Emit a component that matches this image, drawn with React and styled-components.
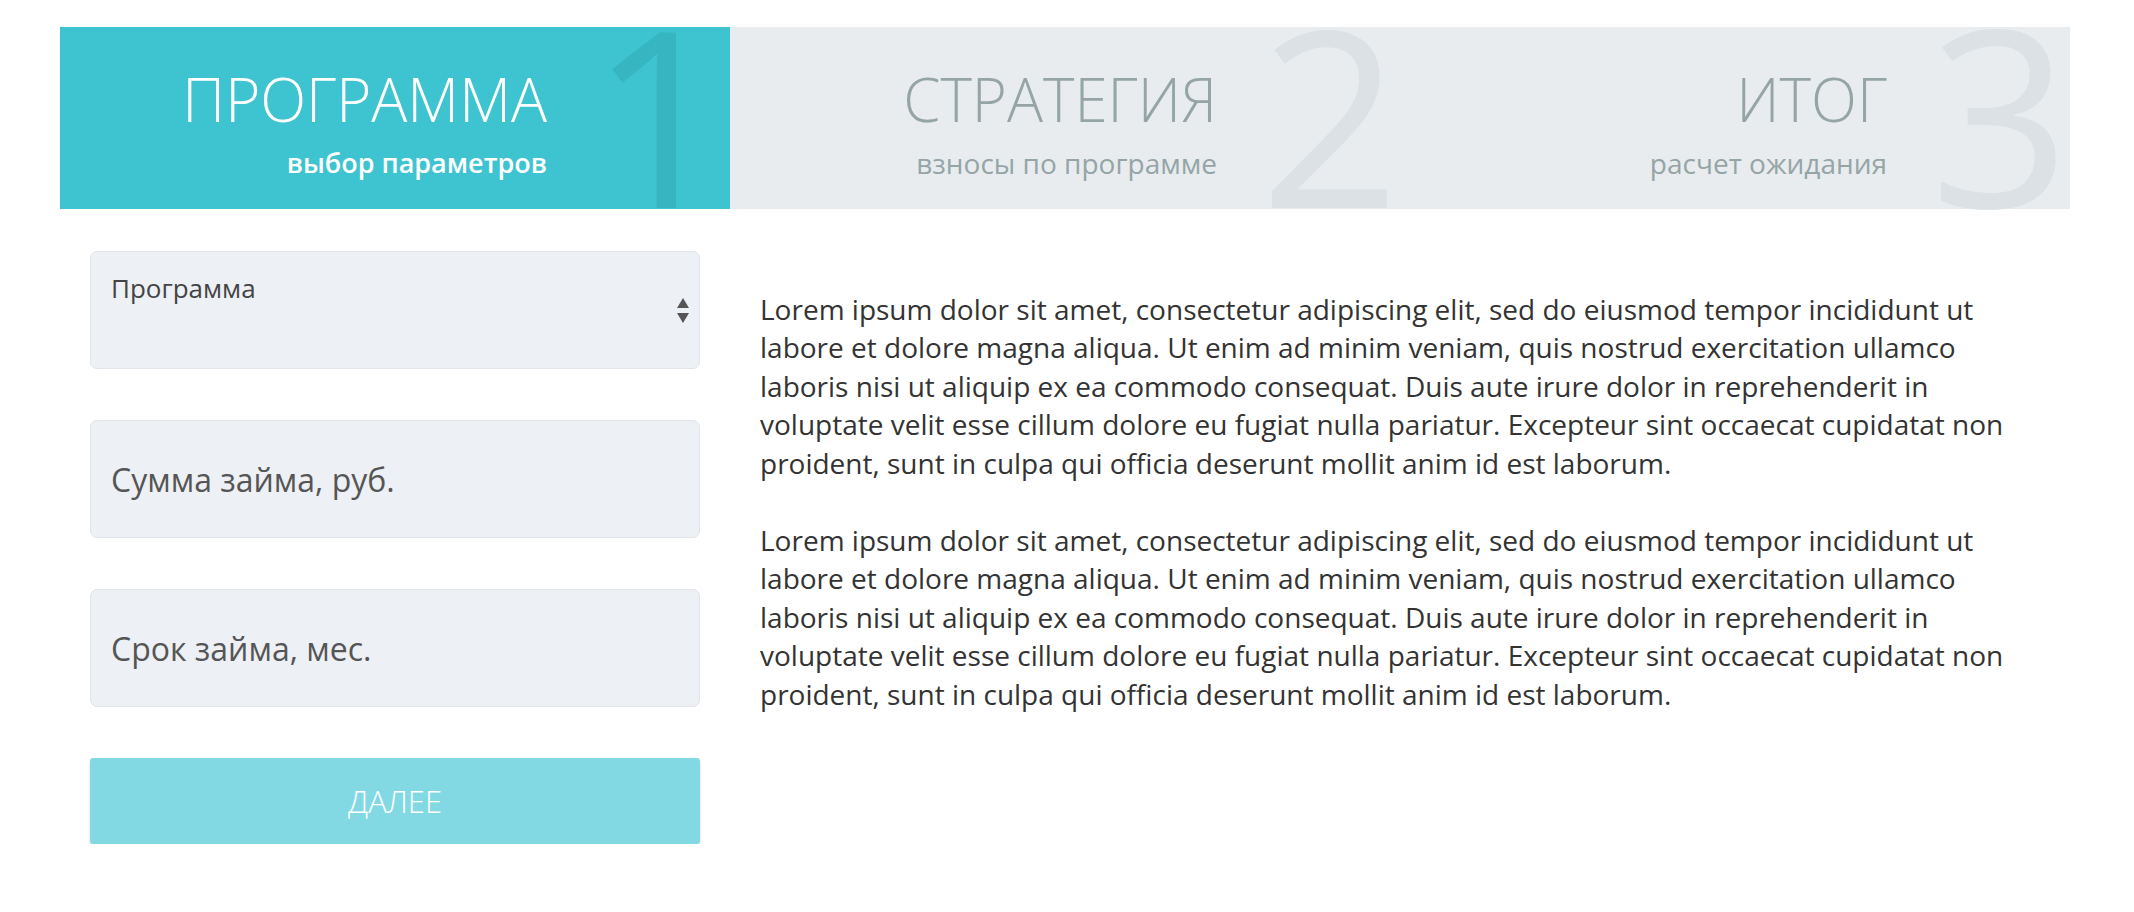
import React from "react";
import styled, { createGlobalStyle } from "styled-components";

const GlobalStyle = createGlobalStyle`
  body {
    margin: 0;
    background: #ffffff;
    font-family: "Open Sans", "Noto Sans", sans-serif;
    color: #333333;
  }
`;

const Page = styled.div`
  width: 2010px;
  margin-left: 60px;
  padding-top: 27px;
`;

const Steps = styled.nav`
  display: grid;
  grid-template-columns: repeat(3, 1fr);
  height: 182px;
  background: #e8ecef;
`;

const Step = styled.div`
  position: relative;
  display: flex;
  flex-direction: column;
  align-items: flex-end;
  padding: 42px 183px 0 0;
  background: ${props => (props.active ? "#3ec4d0" : "#e8ecef")};
  color: ${props => (props.active ? "#ffffff" : "#95a5a6")};
`;

const StepTitle = styled.h2`
  position: relative;
  z-index: 1;
  margin: 0;
  font-size: 60px;
  font-weight: 300;
  line-height: 60px;
`;

const StepNote = styled.span`
  position: relative;
  z-index: 1;
  margin-top: 20px;
  font-size: ${props => (props.active ? 27 : 28)}px;
  line-height: 28px;
  font-weight: ${props => (props.active ? 600 : 400)};
`;

const StepNumber = styled.span`
  position: absolute;
  top: -4px;
  right: 0;
  font-size: 245px;
  font-weight: 400;
  line-height: 180px;
  color: ${props => (props.active ? "#37b6c2" : "#dbe1e5")};
`;

const Content = styled.div`
  display: grid;
  grid-template-columns: 670px 1fr;
`;

const Form = styled.form`
  display: flex;
  flex-direction: column;
  gap: 51px;
  padding: 42px 30px 0;
`;

const Field = styled.label`
  position: relative;
  display: block;
  box-sizing: border-box;
  height: 118px;
  padding: 19px 20px 0;
  background: #edf0f4;
  border: 1px solid #e1e4e9;
  border-radius: 7px;
  font-size: 26px;
  line-height: 35px;
  color: #444444;
`;

const Arrows = styled.svg`
  position: absolute;
  right: 10px;
  top: 46px;
`;

const Input = styled.input`
  display: block;
  box-sizing: border-box;
  width: 100%;
  height: 118px;
  padding: 0 20px;
  background: #edf0f4;
  border: 1px solid #e1e4e9;
  border-radius: 7px;
  font-family: "Open Sans", sans-serif;
  font-size: 32px;
  color: #555555;
  outline: none;

  &::placeholder {
    color: #555555;
    opacity: 1;
  }
`;

const Button = styled.button`
  height: 86px;
  border: none;
  border-radius: 3px;
  background: #83d9e3;
  box-shadow: 0 2px 3px rgba(0, 0, 0, 0.15);
  color: #ffffff;
  font-family: "Open Sans", sans-serif;
  font-size: 31px;
  font-weight: 300;
  cursor: pointer;
`;

const Text = styled.div`
  padding: 81px 30px 0;

  p {
    margin: 0 0 39px;
    font-size: 28px;
    line-height: 38.4px;
    color: #333333;
  }
`;

const lorem =
  "Lorem ipsum dolor sit amet, consectetur adipiscing elit, sed do eiusmod tempor incididunt ut labore et dolore magna aliqua. Ut enim ad minim veniam, quis nostrud exercitation ullamco laboris nisi ut aliquip ex ea commodo consequat. Duis aute irure dolor in reprehenderit in voluptate velit esse cillum dolore eu fugiat nulla pariatur. Excepteur sint occaecat cupidatat non proident, sunt in culpa qui officia deserunt mollit anim id est laborum.";

const steps = [
  { title: "ПРОГРАММА", note: "выбор параметров", num: 1, active: true },
  { title: "СТРАТЕГИЯ", note: "взносы по программе", num: 2 },
  { title: "ИТОГ", note: "расчет ожидания", num: 3 },
];

const App = () => (
  <>
    <GlobalStyle />
    <Page>
      <Steps>
        {steps.map(s => (
          <Step key={s.num} active={s.active}>
            <StepNumber active={s.active}>{s.num}</StepNumber>
            <StepTitle>{s.title}</StepTitle>
            <StepNote active={s.active}>{s.note}</StepNote>
          </Step>
        ))}
      </Steps>
      <Content>
        <Form onSubmit={e => e.preventDefault()}>
          <Field>
            Программа
            <Arrows width="12" height="26" viewBox="0 0 12 26">
              <path d="M6 0 L12 10 L0 10 Z" fill="#555" />
              <path d="M0 15 L12 15 L6 25 Z" fill="#555" />
            </Arrows>
          </Field>
          <Input placeholder="Сумма займа, руб." />
          <Input placeholder="Срок займа, мес." />
          <Button type="submit">ДАЛЕЕ</Button>
        </Form>
        <Text>
          <p>{lorem}</p>
          <p>{lorem}</p>
        </Text>
      </Content>
    </Page>
  </>
);

export default App;
